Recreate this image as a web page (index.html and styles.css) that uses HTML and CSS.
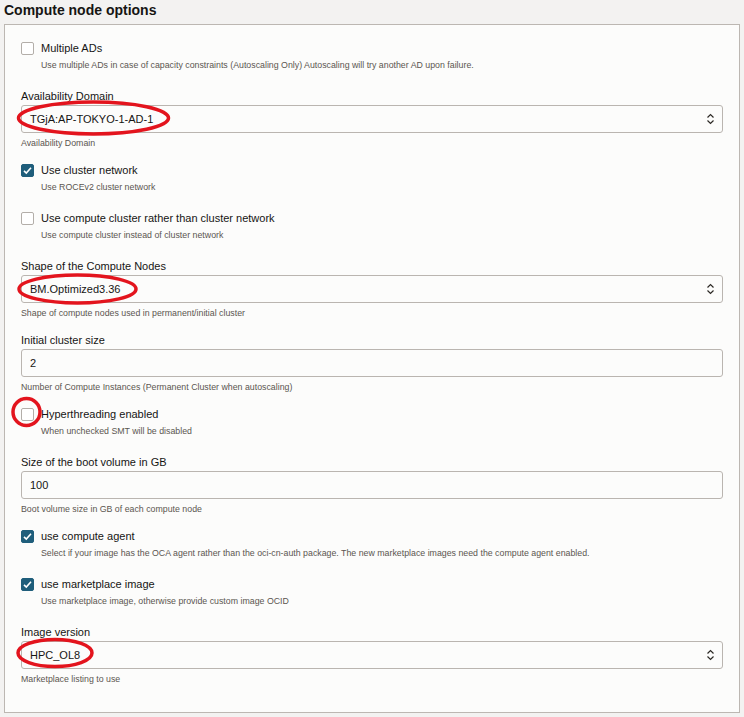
FILE: index.html
```html
<!DOCTYPE html>
<html lang="en">

<head>
    <meta charset="UTF-8">
    <meta name="viewport" content="width=device-width, initial-scale=1.0">
    <title>Compute node options</title>
    <link rel="stylesheet" href="styles.css">
</head>

<body>
    <h2 class="section-title">Compute node options</h2>

    <div class="panel">
        <div class="check-group">
            <label class="check-row"><span class="box"></span>Multiple ADs</label>
            <div class="help indent">Use multiple ADs in case of capacity constraints (Autoscaling Only) Autoscaling will try another AD upon failure.</div>
        </div>

        <div class="field">
            <div class="field-label">Availability Domain</div>
            <div class="select">
                <span>TGjA:AP-TOKYO-1-AD-1</span>
                <svg class="arrows" width="9" height="12" viewBox="0 0 9 12"><path d="M1.5 4.5 L4.5 1.5 L7.5 4.5 M1.5 7.5 L4.5 10.5 L7.5 7.5" /></svg>
            </div>
            <div class="help">Availability Domain</div>
        </div>

        <div class="check-group">
            <label class="check-row"><span class="box checked"><svg width="13" height="13" viewBox="0 0 13 13"><path d="M3 6.8 L5.3 9 L10 3.8" /></svg></span>Use cluster network</label>
            <div class="help indent">Use ROCEv2 cluster network</div>
        </div>

        <div class="check-group">
            <label class="check-row"><span class="box"></span>Use compute cluster rather than cluster network</label>
            <div class="help indent">Use compute cluster instead of cluster network</div>
        </div>

        <div class="field">
            <div class="field-label">Shape of the Compute Nodes</div>
            <div class="select">
                <span>BM.Optimized3.36</span>
                <svg class="arrows" width="9" height="12" viewBox="0 0 9 12"><path d="M1.5 4.5 L4.5 1.5 L7.5 4.5 M1.5 7.5 L4.5 10.5 L7.5 7.5" /></svg>
            </div>
            <div class="help">Shape of compute nodes used in permanent/initial cluster</div>
        </div>

        <div class="field">
            <div class="field-label">Initial cluster size</div>
            <input class="text-input" type="text" value="2">
            <div class="help">Number of Compute Instances (Permanent Cluster when autoscaling)</div>
        </div>

        <div class="check-group">
            <label class="check-row"><span class="box"></span>Hyperthreading enabled</label>
            <div class="help indent">When unchecked SMT will be disabled</div>
        </div>

        <div class="field">
            <div class="field-label">Size of the boot volume in GB</div>
            <input class="text-input" type="text" value="100">
            <div class="help">Boot volume size in GB of each compute node</div>
        </div>

        <div class="check-group">
            <label class="check-row"><span class="box checked"><svg width="13" height="13" viewBox="0 0 13 13"><path d="M3 6.8 L5.3 9 L10 3.8" /></svg></span>use compute agent</label>
            <div class="help indent">Select if your image has the OCA agent rather than the oci-cn-auth package. The new marketplace images need the compute agent enabled.</div>
        </div>

        <div class="check-group">
            <label class="check-row"><span class="box checked"><svg width="13" height="13" viewBox="0 0 13 13"><path d="M3 6.8 L5.3 9 L10 3.8" /></svg></span>use marketplace image</label>
            <div class="help indent">Use marketplace image, otherwise provide custom image OCID</div>
        </div>

        <div class="field">
            <div class="field-label">Image version</div>
            <div class="select">
                <span>HPC_OL8</span>
                <svg class="arrows" width="9" height="12" viewBox="0 0 9 12"><path d="M1.5 4.5 L4.5 1.5 L7.5 4.5 M1.5 7.5 L4.5 10.5 L7.5 7.5" /></svg>
            </div>
            <div class="help">Marketplace listing to use</div>
        </div>
    </div>

    <!-- red annotation marks drawn over the form -->
    <svg class="marks" width="744" height="717" viewBox="0 0 744 717">
        <ellipse cx="93.5" cy="118" rx="75" ry="16" />
        <ellipse cx="77.5" cy="289" rx="58.5" ry="14" />
        <ellipse cx="26.5" cy="412" rx="13.5" ry="13.5" />
        <ellipse cx="55" cy="653" rx="37" ry="13.5" />
    </svg>
</body>

</html>
```

FILE: styles.css
```css
body {
    margin: 0;
    padding: 0 4px;
    background-color: #f3f2f1;
    font-family: 'Liberation Sans', Arial, sans-serif;
    color: #161513;
    position: relative;
}

.section-title {
    font-size: 14px;
    line-height: 16px;
    font-weight: bold;
    margin: 2px 0 6px;
}

.panel {
    background-color: #fcfcfb;
    border: 1px solid #bcb7b2;
    padding: 16px 16px 27px;
    display: flex;
    flex-direction: column;
}

.check-group {
    margin-bottom: 18px;
}

.field {
    margin-bottom: 14px;
}

.panel > :last-child {
    margin-bottom: 0;
}

.check-row {
    display: flex;
    align-items: center;
    gap: 7px;
    font-size: 11px;
    line-height: 14px;
}

.box {
    width: 13px;
    height: 13px;
    box-sizing: border-box;
    border: 1px solid #b3aea9;
    border-radius: 2px;
    background-color: #fff;
    flex-shrink: 0;
}

.box.checked {
    background-color: #1f5e7b;
    border-color: #1f5e7b;
}

.box svg {
    display: block;
    margin: -1px;
}

.box svg path {
    fill: none;
    stroke: #fff;
    stroke-width: 1.6;
}

.help {
    font-size: 8.8px;
    line-height: 12px;
    color: #5b5650;
    margin-top: 4px;
}

.help.indent {
    padding-left: 20px;
}

.field-label {
    font-size: 11px;
    line-height: 14px;
    margin-bottom: 2px;
}

.select,
.text-input {
    height: 28px;
    box-sizing: border-box;
    border: 1px solid #bab5b0;
    border-radius: 3px;
    background-color: #fcfcfb;
    font-family: 'Liberation Sans', Arial, sans-serif;
    font-size: 11px;
    color: #161513;
}

.select {
    display: flex;
    align-items: center;
    justify-content: space-between;
    padding: 0 7px 0 8px;
}

.text-input {
    width: 100%;
    padding: 0 8px;
    margin: 0;
    outline: none;
}

.arrows path {
    fill: none;
    stroke: #2c2925;
    stroke-width: 1.2;
}

.marks {
    position: absolute;
    left: 0;
    top: 0;
    pointer-events: none;
}

.marks ellipse {
    fill: none;
    stroke: #e3141d;
    stroke-width: 3.5;
}
```
